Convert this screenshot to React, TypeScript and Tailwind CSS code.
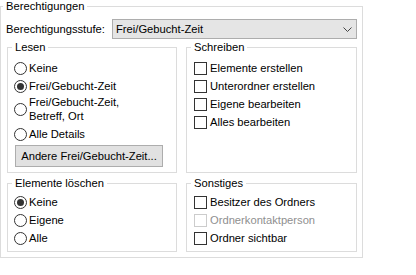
import React from "react";

function Radio({ checked }: { checked?: boolean }) {
  return (
    <span className="flex h-[13px] w-[13px] shrink-0 items-center justify-center rounded-full border border-[#333333] bg-white">
      {checked ? <span className="h-[7px] w-[7px] rounded-full bg-[#333333]" /> : null}
    </span>
  );
}

function Check({ disabled }: { disabled?: boolean }) {
  return (
    <span
      className={
        "h-[13px] w-[13px] shrink-0 border bg-white " +
        (disabled ? "border-[#cccccc]" : "border-[#333333]")
      }
    />
  );
}

function RadioRow({ label, checked }: { label: string; checked?: boolean }) {
  return (
    <div className="flex h-[18px] items-center">
      <Radio checked={checked} />
      <span className="ml-[2px] leading-[14px]">{label}</span>
    </div>
  );
}

function CheckRow({ label, disabled }: { label: string; disabled?: boolean }) {
  return (
    <div className="flex h-[18px] items-center">
      <Check disabled={disabled} />
      <span className={"ml-[3px] leading-[14px] " + (disabled ? "text-[#8f8f8f]" : "")}>{label}</span>
    </div>
  );
}

export default function App() {
  return (
    <div className="h-[275px] w-[416px] overflow-hidden bg-white font-['Liberation_Sans',Arial,sans-serif] text-[11.2px] text-black">
      <fieldset className="h-[258px] w-[363px] border border-[#dcdcdc] pl-[5px] pr-[5px]">
        <legend className="ml-[-3px] px-[3px] leading-[12px]">Berechtigungen</legend>
        <div className="mt-[7px] flex h-[20px] items-center justify-between">
          <span className="leading-[14px]">Berechtigungsstufe:</span>
          <div className="flex h-[20px] w-[245px] items-center justify-between border border-[#adadad] bg-[#e5e5e5] pl-[3px] pr-[4px]">
            <span className="leading-[14px]">Frei/Gebucht-Zeit</span>
            <svg width="9" height="6" viewBox="0 0 9 6" className="mt-[1px]">
              <polyline points="0.5,0.5 4.5,4.5 8.5,0.5" fill="none" stroke="#444" strokeWidth="1" />
            </svg>
          </div>
        </div>
        <div className="ml-[1px] mt-[1px] grid grid-cols-[170px_171px] gap-x-[9px] gap-y-[3px]">
          <fieldset className="h-[133px] border border-[#dcdcdc] pl-[4px]">
            <legend className="px-[3px] leading-[14px]">Lesen</legend>
            <div className="ml-[2px] pt-[5px]">
              <RadioRow label="Keine" />
              <RadioRow label="Frei/Gebucht-Zeit" checked />
              <div className="flex h-[28px] items-center">
                <Radio />
                <span className="ml-[2px] leading-[14px]">
                  Frei/Gebucht-Zeit,
                  <br />
                  Betreff, Ort
                </span>
              </div>
              <div className="mt-[2px]">
                <RadioRow label="Alle Details" />
              </div>
              <button className="ml-[1px] mt-[2px] flex h-[22px] w-[148px] items-center justify-center whitespace-nowrap border border-[#adadad] bg-[#e1e1e1] leading-[14px]">
                Andere Frei/Gebucht-Zeit...
              </button>
            </div>
          </fieldset>
          <fieldset className="h-[133px] border border-[#dcdcdc] pl-[4px]">
            <legend className="px-[3px] leading-[14px]">Schreiben</legend>
            <div className="ml-[3px] pt-[5px]">
              <CheckRow label="Elemente erstellen" />
              <CheckRow label="Unterordner erstellen" />
              <CheckRow label="Eigene bearbeiten" />
              <CheckRow label="Alles bearbeiten" />
            </div>
          </fieldset>
          <fieldset className="h-[76px] border border-[#dcdcdc] pl-[4px]">
            <legend className="px-[3px] leading-[14px]">Elemente löschen</legend>
            <div className="ml-[2px] pt-[3px]">
              <RadioRow label="Keine" checked />
              <RadioRow label="Eigene" />
              <RadioRow label="Alle" />
            </div>
          </fieldset>
          <fieldset className="h-[76px] border border-[#dcdcdc] pl-[4px]">
            <legend className="px-[3px] leading-[14px]">Sonstiges</legend>
            <div className="ml-[3px] pt-[3px]">
              <CheckRow label="Besitzer des Ordners" />
              <CheckRow label="Ordnerkontaktperson" disabled />
              <CheckRow label="Ordner sichtbar" />
            </div>
          </fieldset>
        </div>
      </fieldset>
    </div>
  );
}
